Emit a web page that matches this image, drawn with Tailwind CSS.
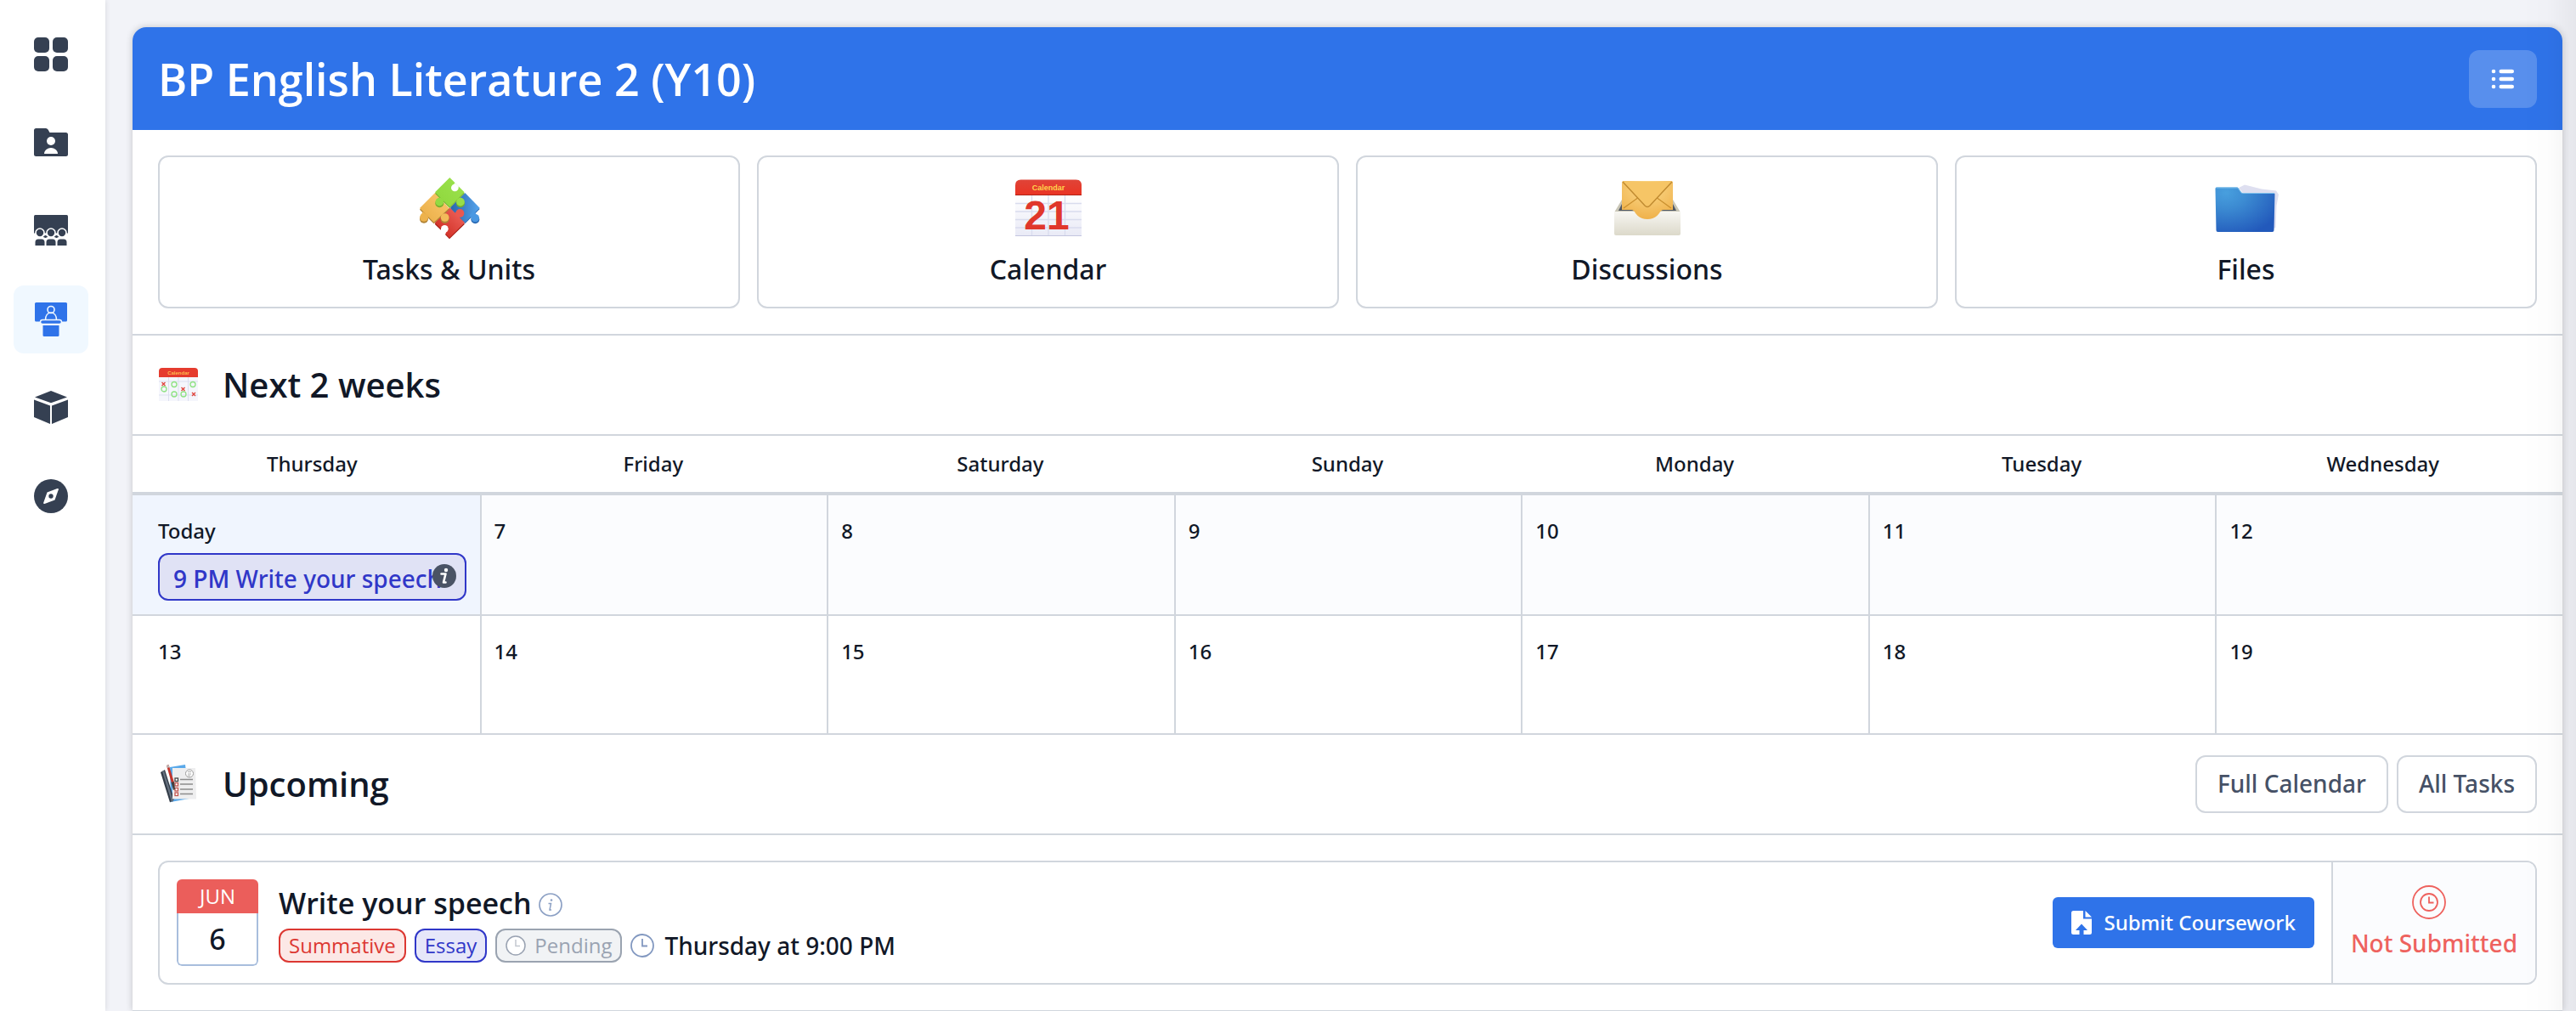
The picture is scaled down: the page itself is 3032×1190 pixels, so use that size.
<!DOCTYPE html>
<html lang="en">
<head>
<meta charset="utf-8">
<title>BP English Literature 2 (Y10)</title>
<script src="https://cdn.jsdelivr.net/npm/@tailwindcss/browser@4"></script>
</head>
<body class="flex min-h-screen bg-[#f2f3f8] font-['Noto_Sans','Open_Sans',sans-serif] text-2xl font-medium text-[#111827]">

<!-- Side navigation -->
<nav aria-label="Main" class="flex w-[124px] shrink-0 flex-col gap-6 bg-white px-4 py-6 pr-5 text-[#354052] shadow-[0_0_6px_rgba(0,0,0,0.12)]">
  <a href="#" aria-label="Dashboard" class="flex h-20 items-center justify-center rounded-xl">
    <svg class="size-10" viewBox="0 0 40 40" fill="currentColor"><rect width="18" height="18" rx="5"/><rect x="22" width="18" height="18" rx="5"/><rect y="22" width="18" height="18" rx="5"/><rect x="22" y="22" width="18" height="18" rx="5"/></svg>
  </a>
  <a href="#" aria-label="Profile folder" class="flex h-20 items-center justify-center rounded-xl">
    <svg class="size-10" viewBox="0 0 40 40" fill="currentColor"><path d="M2.500 3H14q1.500 0 2.500 1.500L18.500 8H37.500Q40 8 40 10.500V33.500Q40 36 37.500 36H2.500Q0 36 0 33.500V5.500Q0 3 2.500 3Z"/><circle cx="20" cy="18" r="5" fill="#fff"/><path d="M12 33c0-4 4-7 8-7s8 3 8 7z" fill="#fff"/></svg>
  </a>
  <a href="#" aria-label="Classes" class="flex h-20 items-center justify-center rounded-xl">
    <svg class="size-10" viewBox="0 0 40 40" fill="currentColor"><path d="M1.500 1h37Q40 1 40 2.500V23H0V2.500Q0 1 1.500 1Z"/><path d="M0 22.500h40V40H0z" fill="#fff"/><g stroke="#fff" stroke-width="1.600"><path d="M9 27l4.500-3.500L18 27l-4.500 2zM22 27l4.500-3.500L31 27l-4.500 2z"/><circle cx="7" cy="22" r="5"/><circle cx="20" cy="22" r="5"/><circle cx="33" cy="22" r="5"/></g><path d="M1.500 37V33q0-3.500 3.500-3.500h4q3.500 0 3.500 3.500v4zM14.500 37V33q0-3.500 3.500-3.500h4q3.500 0 3.500 3.500v4zM27.500 37V33q0-3.500 3.500-3.500h4q3.500 0 3.500 3.500v4z"/></svg>
  </a>
  <a href="#" aria-label="Lessons" aria-current="page" class="flex h-20 items-center justify-center rounded-xl bg-[#f0f8ff] text-[#2f73e9]">
    <svg class="size-10" viewBox="0 0 40 40" fill="currentColor"><rect x="1" width="38" height="22.500" rx="1.500"/><g fill="none" stroke="#f0f8ff" stroke-width="1.600"><circle cx="20" cy="8.500" r="4"/><path d="M13.500 20.500c0-5 2.500-8.500 6.500-8.500s6.500 3.500 6.500 8.500"/></g><rect x="7.500" y="20.500" width="25" height="5" rx="2.500" stroke="#f0f8ff" stroke-width="1.400"/><path d="M10.500 27h19v11.500q0 1.500-1.500 1.500H12q-1.500 0-1.500-1.500z"/></svg>
  </a>
  <a href="#" aria-label="Resources" class="flex h-20 items-center justify-center rounded-xl">
    <svg class="size-10" viewBox="0 0 40 40" fill="currentColor"><path d="M20 0 39 7.500 20 14.300 1 7.500zM0 10.500l19 7v21.500L0 31zM40 10.500l-19 7v21.500l19-8z"/></svg>
  </a>
  <a href="#" aria-label="Explore" class="flex h-20 items-center justify-center rounded-xl">
    <svg class="size-10" viewBox="0 0 40 40" fill="currentColor"><circle cx="20" cy="20" r="20"/><path d="M15.500 15.500 27.500 11q1.700-.4 1.300 1.300L24.500 24.500 12.500 29q-1.700.4-1.300-1.300z" fill="#fff"/><circle cx="20" cy="20" r="2.700"/></svg>
  </a>
</nav>

<main class="flex min-w-0 flex-1 flex-col pt-8 pr-4 pl-8">
  <div class="flex flex-1 flex-col rounded-t-2xl bg-white shadow-[0_0_8px_rgba(0,0,0,0.2)]">

    <header class="flex h-[121px] items-center justify-between rounded-t-2xl bg-[#2f73e9] px-[30px]">
      <h1 class="font-['Open_Sans',sans-serif] text-[52px] leading-[72px] font-semibold text-white">BP English Literature 2 (Y10)</h1>
      <button type="button" aria-label="Open menu" class="flex h-[68px] w-20 items-center justify-center rounded-xl bg-white/20">
        <svg class="h-6 w-7" viewBox="0 0 28 24" fill="#fff"><circle cx="3" cy="3" r="2.300"/><circle cx="3" cy="12" r="2.300"/><circle cx="3" cy="21" r="2.300"/><rect x="9.500" y=".7" width="17.500" height="4.600" rx="2.300"/><rect x="9.500" y="9.700" width="17.500" height="4.600" rx="2.300"/><rect x="9.500" y="18.700" width="17.500" height="4.600" rx="2.300"/></svg>
      </button>
    </header>

    <section class="grid grid-cols-4 gap-5 border-b-2 border-[#d1d6dd] p-[30px] text-[32px] leading-[48px]">
      <a href="#" class="flex flex-col items-center gap-2.5 rounded-xl border-2 border-[#d1d6dd] pt-[22px] pb-5">
        <svg class="size-[76px]" viewBox="63 50 228 228">
          <defs>
            <linearGradient id="pg" x1="0" x2="1" y1="1" y2="0"><stop stop-color="#8fd63c"/><stop offset="1" stop-color="#9be34e"/></linearGradient>
            <linearGradient id="po" x1="0" x2="1" y1="1" y2="0"><stop stop-color="#e9ac45"/><stop offset="1" stop-color="#fbc96e"/></linearGradient>
            <linearGradient id="pb" x1="0" x2="1"><stop stop-color="#2866ab"/><stop offset="1" stop-color="#56a5ee"/></linearGradient>
            <linearGradient id="pr" x1="0" x2="1" y1="1" y2="0"><stop stop-color="#c92218"/><stop offset="1" stop-color="#f26a62"/></linearGradient>
          </defs>
          <!-- blue -->
          <g fill="#2b6bb5" transform="translate(0 4)"><path d="M232 110 180 162l52 53 52-52z"/><circle cx="268" cy="200" r="15"/></g>
          <path d="M232 110 180 162l52 53 52-52z" fill="url(#pb)"/>
          <g fill="#4a98e2"><circle cx="268" cy="199" r="14"/><path d="m248 190 16-20 8 18-14 14z"/></g>
          <!-- red -->
          <path d="M178 168 125 220l20 20 32 33 54-53z" fill="#a51a12"/>
          <path d="M178 162 125 215l20 20 32 34 54-54z" fill="url(#pr)"/>
          <circle cx="214" cy="182" r="15" fill="#ea5850"/><path d="m196 180 10 16 14-4-6-14z" fill="#ea5850"/>
          <circle cx="160" cy="237" r="13" fill="#fff"/><path d="m142 246 10-12 14 12-5 16z" fill="#fff"/>
          <!-- orange -->
          <g fill="#b08336" transform="translate(0 5)"><path d="M126 110 72 164l50 50 54-50z"/><circle cx="87" cy="197" r="15"/><circle cx="161" cy="198" r="15"/></g>
          <path d="M126 110 72 164l50 50 54-50z" fill="url(#po)"/><circle cx="87" cy="197" r="14.500" fill="#edb24d"/><circle cx="161" cy="197" r="14.500" fill="#f3bb5a"/><path d="m84 176 20 20-10 10-18-18z" fill="#edb24d"/>
          <!-- green -->
          <g fill="#75ad2d" transform="translate(0 4)"><path d="M178 56 126 108l52 52 52-52z"/><circle cx="142" cy="143" r="15"/><circle cx="216" cy="143" r="15"/></g>
          <path d="M178 56 126 108l52 52 52-52z" fill="url(#pg)"/><circle cx="142" cy="142" r="14.500" fill="#93da42"/><circle cx="216" cy="142" r="14.500" fill="#97df48"/>
          <circle cx="196" cy="92" r="13" fill="#fff"/><path d="m196 74 14 14-6 8-12-14z" fill="#fff"/>
        </svg>
        <span>Tasks &amp; Units</span>
      </a>
      <a href="#" class="flex flex-col items-center gap-2.5 rounded-xl border-2 border-[#d1d6dd] pt-[22px] pb-5">
        <svg class="h-[76px] w-[78px]" viewBox="0 0 78 76">
          <defs>
            <linearGradient id="cr" x2="0" y2="1"><stop stop-color="#e04438"/><stop offset="1" stop-color="#ea3323"/></linearGradient>
            <linearGradient id="cw" x2="0" y2="1"><stop stop-color="#fff"/><stop offset="1" stop-color="#e9eaf6"/></linearGradient>
          </defs>
          <path d="M0 22h78v49H0z" fill="url(#cw)"/>
          <path d="M19.500 23v47M39 23v47M58.500 23v47M0 32.500h78M0 42h78M0 51.500h78M0 61h78" stroke="#d9dcee" stroke-width="1.300"/>
          <path d="M0 70.500h78" stroke="#c3c6df"/>
          <path d="M0 23V11q0-6.500 6.500-6.500h65Q78 4.500 78 11v12z" fill="url(#cr)"/><path d="M0 22.500h78" stroke="#b0241a"/>
          <text x="39" y="17" text-anchor="middle" font-family="Liberation Sans Narrow, Liberation Sans" font-size="9" font-weight="700" fill="#ffd34d">Calendar</text>
          <text x="37" y="63" text-anchor="middle" font-family="Liberation Sans Narrow, Liberation Sans" font-size="48" font-weight="700" fill="#e0372b">21</text>
        </svg>
        <span>Calendar</span>
      </a>
      <a href="#" class="flex flex-col items-center gap-2.5 rounded-xl border-2 border-[#d1d6dd] pt-[22px] pb-5">
        <svg class="h-[76px] w-[78px]" viewBox="0 0 78 76">
          <defs>
            <radialGradient id="ev" cx=".5" cy=".2" r=".8"><stop stop-color="#fbd98b"/><stop offset="1" stop-color="#efb14a"/></radialGradient>
            <linearGradient id="tr" x2="0" y2="1"><stop stop-color="#f7f6f2"/><stop offset="1" stop-color="#dcd9ca"/></linearGradient>
          </defs>
          <path d="M9 28h60l9 15v8H0v-8z" fill="#c9c6b6"/><path d="M9 33h60l4 8H5z" fill="#4e5663"/>
          <path d="M0 42h78v26q0 2-2 2H2q-2 0-2-2z" fill="url(#tr)"/>
          <path d="M9 8q0-2 2-2h56q2 0 2 2v32H58q-3 0-5 4-5 7-14 7t-14-7q-2-4-5-4H9z" fill="url(#ev)"/>
          <path d="M11 38 29 25M67 38 49 25" stroke="#c98f2e" stroke-width="1.200"/>
          <path d="M10 7 36 35q3 3 6 0L68 7" fill="#f6c566" stroke="#c08a30" stroke-width="1.400"/>
        </svg>
        <span>Discussions</span>
      </a>
      <a href="#" class="flex flex-col items-center gap-2.5 rounded-xl border-2 border-[#d1d6dd] pt-[22px] pb-5">
        <svg class="h-[76px] w-[78px]" viewBox="0 0 78 76">
          <defs><radialGradient id="fo" cx=".18" cy=".12" r="1"><stop stop-color="#489fde"/><stop offset=".35" stop-color="#3c8bd2"/><stop offset="1" stop-color="#2259bb"/></radialGradient></defs>
          <g transform="translate(2)">
          <path d="M28 14 35 10.500 55 15.500 72 17.500 75 22 72.500 35 71.500 61 66 63z" fill="#dedff0"/>
          <path d="M2 13.500h24q1 0 1.700 1l3 4.500q.6 1 1.800 1H69q1.500 0 1.500 1.500L69.500 64q0 2-2 2H3.500q-2 0-2-2L.5 15q0-1.500 1.500-1.500Z" fill="url(#fo)"/>
          <path d="M1.500 14h24.500q1 0 1.700 1l3 4.500q.6 1 1.800 1H70" fill="none" stroke="#7cc0ec"/>
          </g>
        </svg>
        <span>Files</span>
      </a>
    </section>

    <section>
      <div class="flex h-[118px] items-center gap-7 border-b-2 border-[#d1d6dd] px-[30px]">
        <svg class="size-12" viewBox="0 0 48 48">
          <path d="M1 14h46v29H1z" fill="#f5f6fc"/><path d="M12.500 14v29M24 14v29M35.500 14v29M1 20h46M1 36h46" stroke="#dcdff0"/>
          <path d="M1 15V8q0-4 4-4h38q4 0 4 4v7z" fill="#e53b2e"/>
          <text x="24" y="12" text-anchor="middle" font-family="Liberation Sans" font-size="6" font-weight="700" fill="#ffb94d">Calendar</text>
          <g fill="none" stroke="#8fe283" stroke-width="1.300"><circle cx="19" cy="23.500" r="3"/><circle cx="41" cy="23.500" r="3"/><circle cx="7" cy="29" r="3"/><circle cx="19" cy="35" r="3"/><circle cx="30" cy="35" r="3"/></g>
          <path d="m4.500 21 4 4m0-4-4 4M27.500 27l4 4m0-4-4 4M40 33l4 4m0-4-4 4" stroke="#e0433a" stroke-width="1.300"/>
        </svg>
        <h2 class="font-['Open_Sans',sans-serif] text-[40px] leading-[56px] font-semibold">Next 2 weeks</h2>
      </div>

      <table class="w-full table-fixed border-separate border-spacing-0 text-left align-top leading-9">
        <thead>
          <tr class="text-center">
            <th class="h-[70px] border-b-4 border-[#d1d6dd] pr-4 pl-[30px] font-medium">Thursday</th>
            <th class="border-b-4 border-[#d1d6dd] px-4 font-medium">Friday</th>
            <th class="border-b-4 border-[#d1d6dd] px-4 font-medium">Saturday</th>
            <th class="border-b-4 border-[#d1d6dd] px-4 font-medium">Sunday</th>
            <th class="border-b-4 border-[#d1d6dd] px-4 font-medium">Monday</th>
            <th class="border-b-4 border-[#d1d6dd] px-4 font-medium">Tuesday</th>
            <th class="border-b-4 border-[#d1d6dd] pr-[30px] pl-4 font-medium">Wednesday</th>
          </tr>
        </thead>
        <tbody>
          <tr class="bg-[#fbfcfe] align-top">
            <td class="border-b-2 border-[#d1d6dd] bg-[#f0f5fe] pt-6 pr-4 pb-4 pl-[30px]">
              <div>Today</div>
              <a href="#" class="relative mt-2 flex h-14 items-center overflow-hidden rounded-xl border-2 border-[#3037c8] bg-[#e0e2f5] px-4 pt-1 text-[28px] whitespace-nowrap text-[#3037c8]"><span><span class="font-['Open_Sans',sans-serif] font-semibold">9 PM</span> Write your speech</span>
                <svg class="absolute top-[11px] right-2.5 size-7" viewBox="0 0 28 28"><circle cx="14" cy="14" r="14" fill="#4a5365"/><circle cx="16" cy="7" r="2.200" fill="#fff"/><path d="M10.500 11.500h5l-2.500 10h2.500" fill="none" stroke="#fff" stroke-width="2.600" stroke-linecap="round" stroke-linejoin="round"/></svg>
              </a>
            </td>
            <td class="border-b-2 border-l-2 border-[#d1d6dd] px-[15px] pt-6">7</td>
            <td class="border-b-2 border-l-2 border-[#d1d6dd] px-[15px] pt-6">8</td>
            <td class="border-b-2 border-l-2 border-[#d1d6dd] px-[15px] pt-6">9</td>
            <td class="border-b-2 border-l-2 border-[#d1d6dd] px-[15px] pt-6">10</td>
            <td class="border-b-2 border-l-2 border-[#d1d6dd] px-[15px] pt-6">11</td>
            <td class="border-b-2 border-l-2 border-[#d1d6dd] px-[15px] pt-6">12</td>
          </tr>
          <tr class="align-top">
            <td class="h-[140px] border-b-2 border-[#d1d6dd] pt-6 pl-[30px]">13</td>
            <td class="border-b-2 border-l-2 border-[#d1d6dd] px-[15px] pt-6">14</td>
            <td class="border-b-2 border-l-2 border-[#d1d6dd] px-[15px] pt-6">15</td>
            <td class="border-b-2 border-l-2 border-[#d1d6dd] px-[15px] pt-6">16</td>
            <td class="border-b-2 border-l-2 border-[#d1d6dd] px-[15px] pt-6">17</td>
            <td class="border-b-2 border-l-2 border-[#d1d6dd] px-[15px] pt-6">18</td>
            <td class="border-b-2 border-l-2 border-[#d1d6dd] px-[15px] pt-6">19</td>
          </tr>
        </tbody>
      </table>
    </section>

    <section class="border-b border-[#d1d6dd]">
      <div class="flex h-[118px] items-center gap-7 border-b-2 border-[#d1d6dd] px-[30px]">
        <svg class="size-12" viewBox="0 0 48 48">
          <path d="M14 4 32 1l5 40-22 4z" fill="#5aa9ea"/>
          <path d="M3 10 8 7l11 35-5 3.500z" fill="#333c48"/><path d="m5 9 2-1 11 36-2 1z" fill="#66717f"/>
          <path d="M17 5h27l1 36.500H17z" fill="#eeeeef"/>
          <circle cx="37" cy="11.500" r="4.500" fill="#fff" stroke="#9a9a9a"/><path d="M35 9.500h4M35 12h4M35 14h3" stroke="#9a9a9a" stroke-width=".8"/>
          <path d="M26 18.500h15M26 24h15M26 30h15M26 35.500h15" stroke="#8d8d8d" stroke-width="1.400"/>
          <g fill="#fff" stroke="#c3564f" stroke-width="1.300"><rect x="20" y="17" width="3.500" height="3.500" stroke="#444"/><rect x="20" y="22.500" width="3.500" height="3.500"/><rect x="20" y="28.500" width="3.500" height="3.500"/><rect x="20" y="34" width="3.500" height="3.500"/></g>
          <path d="m10 2 2.500-1L19 22l-3 1z" fill="#c5352b"/><path d="m10 2 2.500-1 1 3-2.500 1z" fill="#b9b9b9"/><path d="m15.500 22 3.500-1 1 9-2 1z" fill="#44403f"/>
        </svg>
        <h2 class="flex-1 font-['Open_Sans',sans-serif] text-[40px] leading-[56px] font-semibold">Upcoming</h2>
        <div class="flex gap-2.5 text-[28px] text-[#465166]">
          <button type="button" class="h-[68px] rounded-xl border-2 border-[#d1d6dd] px-6 font-medium">Full Calendar</button>
          <button type="button" class="h-[68px] rounded-xl border-2 border-[#d1d6dd] px-6 font-medium">All Tasks</button>
        </div>
      </div>

      <div class="p-[30px]">
        <article class="flex items-stretch overflow-hidden rounded-xl border-2 border-[#d1d6dd]">
          <div class="flex flex-1 items-center gap-6 p-5">
            <div class="w-24 overflow-hidden rounded-md text-center">
              <div class="h-10 bg-[#eb5e5b] font-['Open_Sans',sans-serif] leading-10 font-normal text-white">JUN</div>
              <div class="h-[62px] rounded-b-md border-2 border-t-0 border-[#a8bedd] text-[34px] leading-[60px]">6</div>
            </div>
            <div class="flex flex-1 flex-col gap-1.5">
              <h3 class="flex items-center gap-2 font-['Open_Sans',sans-serif] text-[34px] leading-[48px] font-semibold">Write your speech
                <svg class="mt-1 size-7" viewBox="0 0 28 28" fill="none" stroke="#8ca0c4"><circle cx="14" cy="14" r="13" stroke-width="1.700"/><circle cx="15" cy="8.500" r="1.300" fill="#8ca0c4" stroke="none"/><path d="M11.500 12.500h3l-1.500 7.500h2" stroke-width="1.500"/></svg>
              </h3>
              <div class="flex items-center gap-2.5">
                <div class="flex gap-2.5 font-['Open_Sans',sans-serif] font-normal">
                  <span class="flex h-10 items-center rounded-xl border-2 border-[#dc3832] bg-[#fce8e6] px-2.5 text-[#dc3832]">Summative</span>
                  <span class="flex h-10 items-center rounded-xl border-2 border-[#3037c8] bg-[#e6e7f9] px-2.5 text-[#3037c8]">Essay</span>
                  <span class="flex h-10 items-center gap-2.5 rounded-xl border-2 border-[#9aa3b0] bg-[#f1f3f5] px-2.5 text-[#9aa3b2]">
                    <svg class="size-6" viewBox="0 0 24 24" fill="none" stroke="currentColor" stroke-width="1.500"><circle cx="12" cy="12" r="11" fill="#fff"/><path d="M12 5v7.500h5" stroke="#c3c8d0"/></svg>Pending
                  </span>
                </div>
                <time class="flex items-center gap-3 text-[28px] leading-10">
                  <svg class="size-7" viewBox="0 0 28 28" fill="none" stroke="#8298c0" stroke-width="1.800"><circle cx="14" cy="14" r="13"/><path d="M14 6v8.500h6"/></svg>Thursday at 9:00 PM
                </time>
              </div>
            </div>
            <button type="button" class="flex h-[60px] items-center gap-3.5 rounded-md bg-[#2f73e9] px-[22px] font-medium text-white">
              <svg class="h-7 w-6" viewBox="0 0 24 28" fill="#fff"><path d="M2.500 0H14v9.500h10v16q0 2.500-2.500 2.500H14.500v-5H19L12 15.500 5 23h4.500v5H2.500Q0 28 0 25.500v-23Q0 0 2.500 0Z"/><path d="M16.500 0 24 7.500h-7.500z"/></svg>Submit Coursework
            </button>
          </div>
          <div class="flex flex-col items-center justify-center gap-2 border-l-2 border-[#d1d6dd] bg-[#fbfcfe] px-[21px] text-[28px] leading-10 text-[#ee625e]">
            <svg class="mr-3 size-10" viewBox="0 0 40 40" fill="none" stroke="currentColor" stroke-width="1.800"><circle cx="20" cy="20" r="19"/><circle cx="20" cy="20" r="10"/><path d="M20 13.500V20.500h5.500"/></svg>
            <span>Not Submitted</span>
          </div>
        </article>
      </div>
    </section>
  </div>
</main>

<!-- Shade cast along the window's right edge -->
<div class="pointer-events-none fixed inset-y-0 right-0 w-16 bg-linear-to-r from-transparent via-black/1 to-black/5"></div>
</body>
</html>
